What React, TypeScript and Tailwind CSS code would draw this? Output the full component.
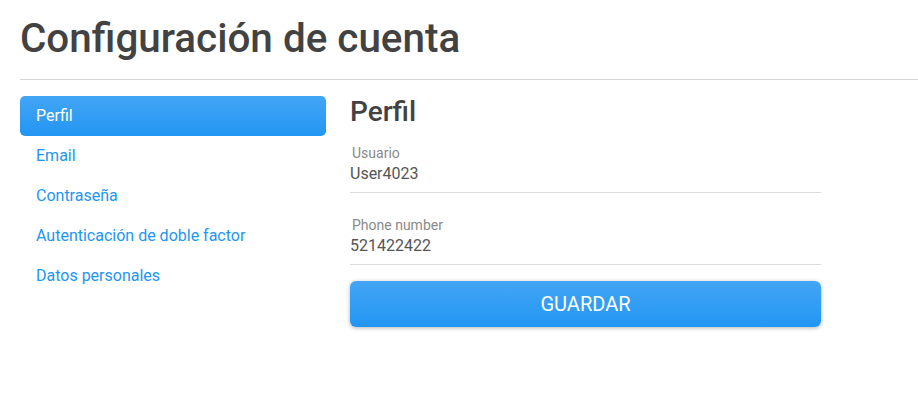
export default function App() {
  const items = ["Perfil", "Email", "Contraseña", "Autenticación de doble factor", "Datos personales"];

  return (
    <div className="min-h-[403px] bg-white font-['Roboto',sans-serif]">
      <h1 className="pl-5 pt-[15px] text-[40.4px] font-medium leading-[48px] text-[#424242]">
        Configuración de cuenta
      </h1>
      <div className="ml-5 mt-4 border-b border-[#d6d6d6]" />

      <div className="mt-4 flex pl-5">
        <nav className="flex w-[306px] flex-col">
          {items.map((item, i) =>
            i === 0 ? (
              <div
                key={item}
                className="flex h-10 items-center rounded-[5px] bg-gradient-to-b from-[#42a5f5] to-[#2196f3] px-4 text-base text-white"
              >
                {item}
              </div>
            ) : (
              <div key={item} className="flex h-10 items-center px-4 text-base text-[#2196f3]">
                {item}
              </div>
            )
          )}
        </nav>

        <section className="ml-6 w-[471px]">
          <h2 className="text-[28px] font-medium leading-8 text-[#424242]">Perfil</h2>

          <div className="mt-[17px] border-b border-[#dcdcdc] pb-2">
            <label className="block pl-0.5 text-sm leading-4 text-[#8a8a8a]">Usuario</label>
            <div className="mt-[3px] text-base leading-5 text-[#555]">User4023</div>
          </div>

          <div className="mt-[24px] border-b border-[#dcdcdc] pb-2">
            <label className="block pl-0.5 text-sm leading-4 text-[#8a8a8a]">Phone number</label>
            <div className="mt-[3px] text-base leading-5 text-[#555]">521422422</div>
          </div>

          <button className="mt-4 flex h-[46px] w-full items-center justify-center rounded-[6px] bg-gradient-to-b from-[#42a5f5] to-[#2196f3] text-xl font-normal text-white shadow-[0_1px_4px_rgba(0,0,0,0.3)]">
            GUARDAR
          </button>
        </section>
      </div>
    </div>
  );
}
